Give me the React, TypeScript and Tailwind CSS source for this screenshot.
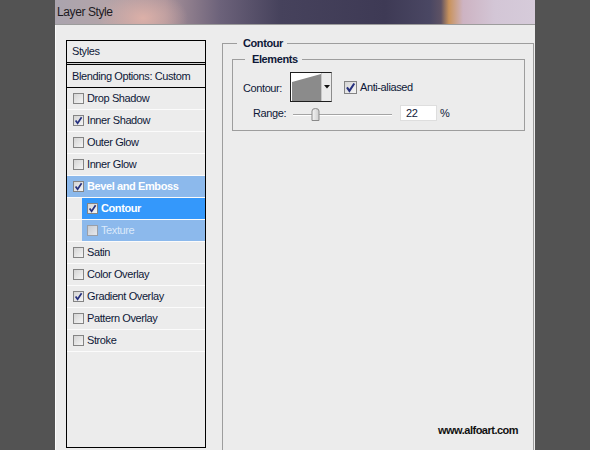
import React from 'react';

type Row = {
  label: string;
  checked?: boolean;
  state?: 'parent' | 'active' | 'sub';
  indent?: boolean;
};

const rows: Row[] = [
  { label: 'Drop Shadow' },
  { label: 'Inner Shadow', checked: true },
  { label: 'Outer Glow' },
  { label: 'Inner Glow' },
  { label: 'Bevel and Emboss', checked: true, state: 'parent' },
  { label: 'Contour', checked: true, state: 'active', indent: true },
  { label: 'Texture', state: 'sub', indent: true },
  { label: 'Satin' },
  { label: 'Color Overlay' },
  { label: 'Gradient Overlay', checked: true },
  { label: 'Pattern Overlay' },
  { label: 'Stroke' },
];

const Check: React.FC<{ checked?: boolean; big?: boolean; dim?: boolean }> = ({ checked, big, dim }) => (
  <span
    className={`${big ? 'w-[13px] h-[13px]' : 'w-[11px] h-[11px]'} shrink-0 border ${
      dim ? 'border-[#9a9fa8] bg-[linear-gradient(135deg,#c9ccd2,#e6e8ec)]' : 'border-[#848484] bg-[linear-gradient(135deg,#d4d4d4,#f5f5f5)]'
    } flex items-center justify-center`}
  >
    {checked && (
      <svg width={big ? 11 : 9} height={big ? 11 : 9} viewBox="0 0 9 9">
        <path d="M1.6 4.4 L3.6 7.2 L7.6 1.2" fill="none" stroke="#25307e" strokeWidth="1.7" />
      </svg>
    )}
  </span>
);

const StyleRow: React.FC<{ row: Row }> = ({ row }) => {
  const bg =
    row.state === 'parent' || row.state === 'sub'
      ? 'bg-[#8cb9ec]'
      : row.state === 'active'
      ? 'bg-[#3498fb]'
      : '';
  const text =
    row.state === 'parent' || row.state === 'active'
      ? 'text-white font-bold'
      : row.state === 'sub'
      ? 'text-[#dbe9fa]'
      : 'text-[#0e1838]';
  return (
    <div className={`h-[22px] border-b border-[#fbfbfb] flex ${row.indent ? 'pl-[15px]' : ''}`}>
      <div className={`flex-1 flex items-center ${row.indent ? 'pl-[5px]' : 'pl-[6px]'} ${bg}`}>
        <Check checked={row.checked} dim={row.state === 'sub'} />
        <span className={`ml-[3px] ${text}`}>{row.label}</span>
      </div>
    </div>
  );
};

export default function App() {
  return (
    <div className="w-[590px] h-[450px] bg-[#535353] overflow-hidden flex font-['Liberation_Sans',Arial,sans-serif] text-[11px] tracking-[-0.4px] leading-[13px]">
      <div className="ml-[55px] w-[480px] h-full flex flex-col bg-[#ececec] relative overflow-hidden">
        {/* title bar */}
        <div className="h-[25px] shrink-0 border-b border-[#9c9c9c] pl-[2px] flex items-center text-[12px] text-[#1c1a22] bg-[radial-gradient(ellipse_45px_28px_at_88px_18px,#dcb0a8,transparent),linear-gradient(90deg,#aaa4ae_0px,#b3a4a9_50px,#a8929a_110px,#6c627a_165px,#46425c_225px,#3e3a55_330px,#4a4763_375px,#5e5264_386px,#c9935c_394px,#cdb3c2_408px,#d3c6d6_440px,#d6cbda_480px)]">
          Layer Style
        </div>

        <div className="flex flex-1 border-l border-[#fafafa]">
          {/* styles list */}
          <div className="ml-[10px] mt-[15px] w-[140px] h-[408px] shrink-0 border border-black flex flex-col text-[#0e1838]">
            <div className="h-[22px] border-b border-black pl-[5px] flex items-center">Styles</div>
            <div className="h-[2px] border-b border-black bg-[#cfcfcf]" />
            <div className="h-[23px] border-b border-black pl-[5px] flex items-center">Blending Options: Custom</div>
            {rows.map((r) => (
              <StyleRow key={r.label} row={r} />
            ))}
          </div>

          {/* contour group */}
          <fieldset className="ml-[16px] mt-[12px] w-[312px] h-[430px] shrink-0 border border-[#9d9d9d] pl-[9px] pt-[3px] min-w-0">
            <legend className="ml-[5px] pl-[6px] pr-[4px] font-bold text-[#0e1838]">Contour</legend>
            <fieldset className="w-[293px] border border-[#9d9d9d] pl-[10px] pt-[6px] pb-[9px] min-w-0">
              <legend className="ml-[2px] pl-[7px] pr-[4px] font-bold text-[#0e1838]">Elements</legend>
              <div className="flex items-center h-[30px] text-[#0e1838]">
                <span className="w-[47px] pt-[2px]">Contour:</span>
                <div className="w-[42px] h-[30px] border border-[#1e1e1e] border-r-[#8c8c8c] flex">
                  <div className="w-[30px] bg-white flex items-end">
                    <svg width="30" height="28" viewBox="0 0 30 28">
                      <polygon points="1,9 30,1 30,28 1,28" fill="#8b8b8b" />
                    </svg>
                  </div>
                  <div className="flex-1 bg-[#ebebeb] border-l border-[#c8c8c8] flex items-center justify-center">
                    <svg width="6" height="4" viewBox="0 0 6 4">
                      <polygon points="0,0 6,0 3,3.5" fill="#111" />
                    </svg>
                  </div>
                </div>
                <span className="ml-[12px]">
                  <Check checked big />
                </span>
                <span className="ml-[3px]">Anti-aliased</span>
              </div>
              <div className="mt-[3px] h-[16px] flex items-center pl-[10px] text-[#0e1838]">
                <span className="w-[40px]">Range:</span>
                <div className="w-[99px] h-[16px] relative">
                  <div className="absolute left-0 right-0 top-[9px] h-[2px] border-t border-[#a4a4a4] border-b border-b-white" />
                  <svg className="absolute left-[18px] top-[3px]" width="9" height="13" viewBox="0 0 9 13">
                    <defs>
                      <linearGradient id="th" x1="0" y1="0" x2="1" y2="0">
                        <stop offset="0" stopColor="#f4f4f4" />
                        <stop offset="1" stopColor="#cfcfcf" />
                      </linearGradient>
                    </defs>
                    <path d="M1 3 Q1 0.5 4.5 0.5 Q8 0.5 8 3 L8 12.5 L1 12.5 Z" fill="url(#th)" stroke="#8a8a8a" strokeWidth="1" />
                  </svg>
                </div>
                <div className="ml-[8px] w-[37px] h-[16px] bg-white border border-[#dedede] pl-[5px] flex items-center">22</div>
                <span className="ml-[3px]">%</span>
              </div>
            </fieldset>
          </fieldset>
        </div>

        <div className="absolute left-[383px] top-[424px] font-bold text-[#111] tracking-[-0.5px]">www.alfoart.com</div>
      </div>
    </div>
  );
}
